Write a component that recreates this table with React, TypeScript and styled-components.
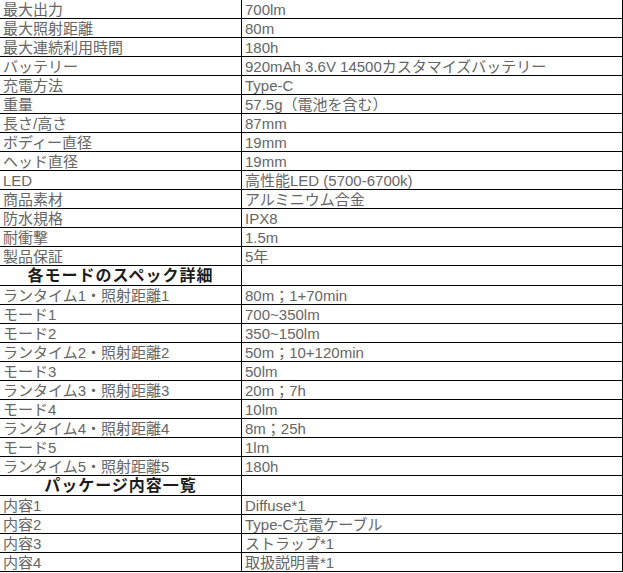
import styled, { createGlobalStyle } from 'styled-components'

const GlobalStyle = createGlobalStyle`
  html, body {
    margin: 0;
    padding: 0;
    background: #fff;
  }
`

const Table = styled.div`
  width: 622px;
  border-right: 1px solid #000;
  font-family: 'Liberation Sans', 'Noto Sans CJK JP', sans-serif;
  font-size: 15px;
  color: #666;
`

const Row = styled.div<{ $head?: boolean }>`
  display: grid;
  grid-template-columns: 242px 1fr;
  height: ${props => (props.$head ? '20px' : '19px')};
  box-sizing: border-box;
  border-bottom: 1px solid #000;
`

const Label = styled.div<{ $head?: boolean }>`
  border-right: 1px solid #000;
  padding: 1px 0 0 ${props => (props.$head ? '0' : '3px')};
  line-height: 18px;
  white-space: nowrap;
  overflow: hidden;
  text-align: ${props => (props.$head ? 'center' : 'left')};
  font-weight: ${props => (props.$head ? 700 : 400)};
  font-size: ${props => (props.$head ? '16px' : '15px')};
  letter-spacing: ${props => (props.$head ? '1px' : '0')};
  color: ${props => (props.$head ? '#1c1c1c' : 'inherit')};
`

const Value = styled.div`
  padding: 1px 0 0 3px;
  line-height: 18px;
  white-space: nowrap;
  overflow: hidden;
`

type Spec = [string, string]

const specs: Spec[] = [
  ['最大出力', '700lm'],
  ['最大照射距離', '80m'],
  ['最大連続利用時間', '180h'],
  ['バッテリー', '920mAh 3.6V 14500カスタマイズバッテリー'],
  ['充電方法', 'Type-C'],
  ['重量', '57.5g（電池を含む）'],
  ['長さ/高さ', '87mm'],
  ['ボディー直径', '19mm'],
  ['ヘッド直径', '19mm'],
  ['LED', '高性能LED (5700-6700k)'],
  ['商品素材', 'アルミニウム合金'],
  ['防水規格', 'IPX8'],
  ['耐衝撃', '1.5m'],
  ['製品保証', '5年'],
]

const modes: Spec[] = [
  ['ランタイム1・照射距離1', '80m；1+70min'],
  ['モード1', '700~350lm'],
  ['モード2', '350~150lm'],
  ['ランタイム2・照射距離2', '50m；10+120min'],
  ['モード3', '50lm'],
  ['ランタイム3・照射距離3', '20m；7h'],
  ['モード4', '10lm'],
  ['ランタイム4・照射距離4', '8m；25h'],
  ['モード5', '1lm'],
  ['ランタイム5・照射距離5', '180h'],
]

const contents: Spec[] = [
  ['内容1', 'Diffuse*1'],
  ['内容2', 'Type-C充電ケーブル'],
  ['内容3', 'ストラップ*1'],
  ['内容4', '取扱説明書*1'],
]

const Rows = ({ items }: { items: Spec[] }) => (
  <>
    {items.map(([label, value]) => (
      <Row key={label}>
        <Label>{label}</Label>
        <Value>{value}</Value>
      </Row>
    ))}
  </>
)

const Heading = ({ title }: { title: string }) => (
  <Row $head>
    <Label $head>{title}</Label>
    <Value />
  </Row>
)

const App = () => (
  <>
    <GlobalStyle />
    <Table>
      <Rows items={specs} />
      <Heading title="各モードのスペック詳細" />
      <Rows items={modes} />
      <Heading title="パッケージ内容一覧" />
      <Rows items={contents} />
    </Table>
  </>
)

export default App
